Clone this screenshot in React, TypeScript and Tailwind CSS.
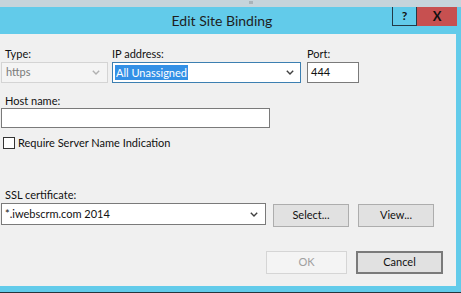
import React from 'react';

function Chevron({ color }: { color: string }) {
  return (
    <svg width="8" height="5" viewBox="0 0 8 5" className="shrink-0">
      <path d="M0.8 0.8L4 4L7.2 0.8" fill="none" stroke={color} strokeWidth="1.4" />
    </svg>
  );
}

function WinButton({ label, width, disabled, isDefault }: { label: string; width: string; disabled?: boolean; isDefault?: boolean }) {
  return (
    <div
      className={
        'h-[23px] flex items-center justify-center ' +
        width +
        (disabled
          ? ' bg-[#f4f4f4] border border-[#d5d5d5] text-[#a0a0a0]'
          : isDefault
            ? ' bg-[#e1e1e1] border-2 border-[#7a7a7a] text-[#111]'
            : ' bg-[#e1e1e1] border border-[#adadad] text-[#111]')
      }
    >
      {label}
    </div>
  );
}

export default function App() {
  return (
    <div
      className="w-[461px] h-[293px] flex flex-col bg-[#62cbea] overflow-hidden text-[#111]"
      style={{ fontFamily: 'Lato, "Noto Sans", sans-serif' }}
    >
      {/* desktop strip behind the window */}
      <div className="h-[7px] bg-[#c6d4db] flex justify-center">
        <div className="w-[4px] h-[3px] mt-[1px] ml-[40px] bg-[#a9b4ba]" />
      </div>

      {/* title bar */}
      <div className="h-[27px] flex items-start">
        <div className="flex-1 h-full flex items-center justify-center pl-[52px] text-[14px] text-[#1e1e1e]">
          Edit Site Binding
        </div>
        <div className="w-[25px] h-[19px] flex items-center justify-center border-l border-b border-r border-[#233a47] text-[12px] font-bold text-[#111]">
          ?
        </div>
        <div className="w-[40px] h-[19px] flex items-center justify-center bg-[#c75050] text-[13px] font-bold text-[#111]">
          X
        </div>
        <div className="w-[4px]" />
      </div>

      {/* client area */}
      <div className="flex-1 flex">
        <div className="w-[456px] h-full bg-[#f0f0f0] flex flex-col pt-[12px] text-[11px]">
          <div className="flex">
            <div className="w-[107px] ml-[1px] flex flex-col">
              <div className="h-[16px] leading-[16px] pl-[4px]">Type:</div>
              <div className="h-[21px] flex items-center justify-between pl-[4px] pr-[7px] bg-[#f4f4f4] border border-[#d4d4d4] text-[#7a7a7a]">
                <span>https</span>
                <Chevron color="#b0b0b0" />
              </div>
            </div>
            <div className="w-[189px] ml-[4px] flex flex-col">
              <div className="h-[16px] leading-[16px]">IP address:</div>
              <div className="h-[21px] flex items-center justify-between pl-[2px] pr-[6px] bg-white border border-[#3c7fb1]">
                <span className="bg-[#3390e6] text-white leading-[15px] px-[1px]">All Unassigned</span>
                <Chevron color="#404040" />
              </div>
            </div>
            <div className="w-[52px] ml-[6px] flex flex-col">
              <div className="h-[16px] leading-[16px]">Port:</div>
              <div className="h-[21px] flex items-center pl-[3px] bg-white border border-[#7a7a7a]">444</div>
            </div>
          </div>

          <div className="mt-[10px] h-[15px] leading-[15px] pl-[5px]">Host name:</div>
          <div className="ml-[1px] w-[269px] h-[20px] bg-white border border-[#7a7a7a]" />

          <div className="mt-[9px] flex items-center gap-[3px] pl-[3px]">
            <div className="w-[12px] h-[12px] bg-white border border-[#333]" />
            <span className="leading-[12px]">Require Server Name Indication</span>
          </div>

          <div className="mt-[37px] h-[17px] leading-[17px] pl-[5px]">SSL certificate:</div>
          <div className="flex items-start">
            <div className="ml-[1px] w-[265px] h-[22px] flex items-center justify-between pl-[3px] pr-[7px] bg-white border border-[#7a7a7a]">
              <span>*.iwebscrm.com 2014</span>
              <Chevron color="#404040" />
            </div>
            <div className="ml-[7px] mt-[1px]">
              <WinButton label="Select..." width="w-[76px]" />
            </div>
            <div className="ml-[9px] mt-[1px]">
              <WinButton label="View..." width="w-[76px]" />
            </div>
          </div>

          <div className="mt-[24px] flex justify-end pr-[13px] gap-[9px]">
            <WinButton label="OK" width="w-[81px]" disabled />
            <WinButton label="Cancel" width="w-[87px]" isDefault />
          </div>
        </div>
      </div>

      {/* bottom frame */}
      <div className="h-[6px]" />
      <div className="h-[1px] bg-[#26353d]" />
    </div>
  );
}
